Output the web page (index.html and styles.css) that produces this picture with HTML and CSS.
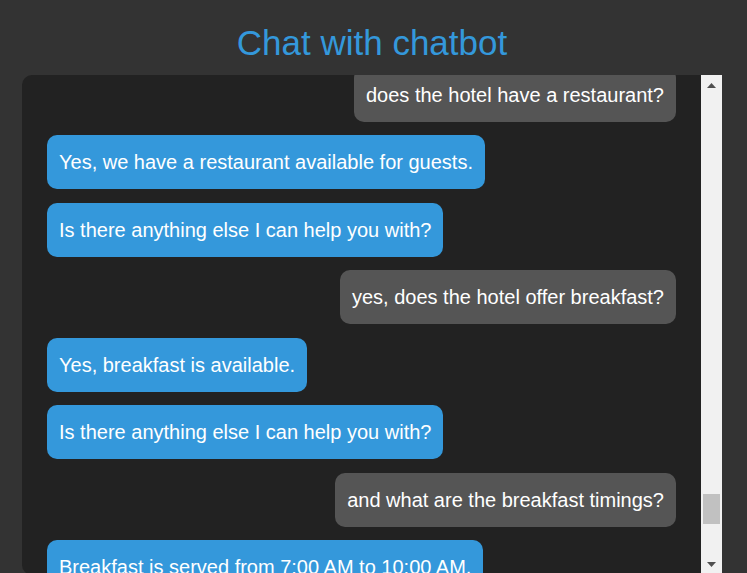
FILE: index.html
```html
<!DOCTYPE html>
<html lang="en">
<head>
<meta charset="utf-8">
<title>Chat with chatbot</title>
<link rel="stylesheet" href="styles.css">
</head>
<body>
<div class="page">
  <h1 class="title">Chat with chatbot</h1>
  <div class="panel">
    <div class="chat" id="chat">
      <div class="msg user">does the hotel have a restaurant?</div>
      <div class="msg bot">Yes, we have a restaurant available for guests.</div>
      <div class="msg bot">Is there anything else I can help you with?</div>
      <div class="msg user">yes, does the hotel offer breakfast?</div>
      <div class="msg bot">Yes, breakfast is available.</div>
      <div class="msg bot">Is there anything else I can help you with?</div>
      <div class="msg user">and what are the breakfast timings?</div>
      <div class="msg bot" id="anchor">Breakfast is served from 7:00 AM to 10:00 AM.</div>
      <div class="msg bot">Is there anything else I can help you with?</div>
      <div class="msg user">is there free wifi?</div>
      <div class="msg bot">Yes, free Wi-Fi is available throughout the hotel.</div>
      <div class="msg bot">Is there anything else I can help you with?</div>
      <div class="msg user">no, thank you</div>
      <div class="msg bot">You're welcome! Have a great stay.</div>
      <div class="msg bot">Goodbye!</div>
    </div>
    <div class="scrollbar" aria-hidden="true">
      <div class="sb-btn">
        <svg width="9" height="5" viewBox="0 0 9 5"><polygon points="4.5,0 9,5 0,5" fill="#505050"/></svg>
      </div>
      <div class="sb-track" id="track">
        <div class="sb-thumb" id="thumb"></div>
      </div>
      <div class="sb-btn">
        <svg width="9" height="5" viewBox="0 0 9 5"><polygon points="0,0 9,0 4.5,5" fill="#505050"/></svg>
      </div>
    </div>
  </div>
</div>
<script src="script.js"></script>
</body>
</html>
```

FILE: styles.css
```css
html, body {
  margin: 0;
  padding: 0;
  background: #333333;
  font-family: "Liberation Sans", Arial, sans-serif;
  overflow: hidden;
}

.page {
  width: 744px;
  padding-top: 23px;
}

.title {
  margin: 0 0 12px;
  font-size: 35px;
  line-height: 40px;
  font-weight: normal;
  color: #3498db;
  text-align: center;
}

.panel {
  display: flex;
  width: 700px;
  height: 500px;
  margin: 0 auto;
  background: #222222;
  border-radius: 10px 0 0 10px;
  overflow: hidden;
}

.chat {
  flex: 1;
  min-width: 0;
  padding: 13.5px 25px;
  overflow-y: auto;
  scrollbar-width: none;
  display: flex;
  flex-direction: column;
  align-items: flex-start;
  gap: 13.5px;
}

.chat::-webkit-scrollbar {
  display: none;
}

.msg {
  flex: none;
  padding: 12px;
  border-radius: 10px;
  font-size: 20px;
  line-height: 30px;
  color: #ffffff;
  white-space: nowrap;
}

.bot {
  background: #3498db;
}

.user {
  align-self: flex-end;
  background: #555555;
}

.scrollbar {
  flex: none;
  width: 21px;
  display: flex;
  flex-direction: column;
  background: #f1f1f1;
}

.sb-btn {
  flex: none;
  height: 21px;
  display: flex;
  align-items: center;
  justify-content: center;
}

.sb-track {
  flex: 1;
  position: relative;
}

.sb-thumb {
  position: absolute;
  left: 2px;
  right: 2px;
  top: 0;
  height: 30px;
  background: #c1c1c1;
}
```

FILE: script.js
```js
(function () {
  var chat = document.getElementById('chat');
  var history = [
    ['user', 'hi'],
    ['bot', 'Hello! How can I help you today?'],
    ['user', 'what time is check-in?'],
    ['bot', 'Check-in time is 2:00 PM.'],
    ['bot', 'Is there anything else I can help you with?'],
    ['user', 'what time is check-out?'],
    ['bot', 'Check-out time is 11:00 AM.'],
    ['bot', 'Is there anything else I can help you with?'],
    ['user', 'is parking available?'],
    ['bot', 'Yes, free parking is available for guests.'],
    ['bot', 'Is there anything else I can help you with?'],
    ['user', 'does the hotel have a pool?'],
    ['bot', 'Yes, we have an outdoor pool.'],
    ['bot', 'Is there anything else I can help you with?']
  ];
  var first = chat.firstElementChild;
  var count = 98;
  for (var i = 0; i < count; i++) {
    var item = history[i % history.length];
    var el = document.createElement('div');
    el.className = 'msg ' + item[0];
    el.textContent = item[1];
    chat.insertBefore(el, first);
  }

  var anchor = document.getElementById('anchor');
  var track = document.getElementById('track');
  var thumb = document.getElementById('thumb');

  function updateThumb() {
    var trackH = track.clientHeight;
    var ratio = chat.clientHeight / chat.scrollHeight;
    var thumbH = Math.max(17, trackH * ratio);
    var maxScroll = chat.scrollHeight - chat.clientHeight;
    var top = maxScroll > 0 ? (trackH - thumbH) * chat.scrollTop / maxScroll : 0;
    thumb.style.height = thumbH + 'px';
    thumb.style.top = top + 'px';
  }

  chat.scrollTop = anchor.offsetTop - chat.offsetTop - 465;
  chat.addEventListener('scroll', updateThumb);
  updateThumb();
})();
```
